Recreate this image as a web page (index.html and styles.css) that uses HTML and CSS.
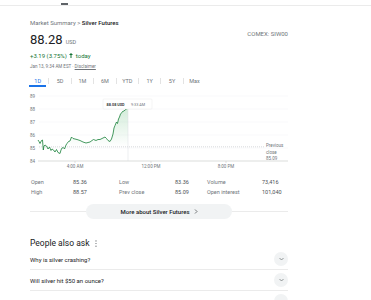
FILE: index.html
```html
<!DOCTYPE html>
<html lang="en">
<head>
    <meta charset="UTF-8">
    <meta name="viewport" content="width=device-width, initial-scale=1.0">
    <title>Silver Futures</title>
    <link rel="stylesheet" href="styles.css">
</head>
<body>
    <div class="topbar">
        <span class="topbar-tab"></span>
    </div>

    <div class="summary">
        <div class="crumb">Market Summary &gt; <b>Silver Futures</b></div>

        <div class="price-row">
            <div class="price">88.28<small>USD</small></div>
            <div class="exchange">COMEX: SIW00</div>
        </div>

        <div class="change">+3.19 (3.75%)
            <svg class="up-arrow" width="4" height="5" viewBox="0 0 8 10"><path d="M4 0 L8 4 H5 V10 H3 V4 H0 Z" fill="#137333"/></svg>
            today</div>
        <div class="asof">Jan 13, 9:34 AM EST · <span class="link">Disclaimer</span></div>

        <div class="ranges">
            <span class="range active"><span>1D</span></span>
            <i class="sep"></i>
            <span class="range"><span>5D</span></span>
            <i class="sep"></i>
            <span class="range"><span>1M</span></span>
            <i class="sep"></i>
            <span class="range"><span>6M</span></span>
            <i class="sep"></i>
            <span class="range"><span>YTD</span></span>
            <i class="sep"></i>
            <span class="range"><span>1Y</span></span>
            <i class="sep"></i>
            <span class="range"><span>5Y</span></span>
            <i class="sep"></i>
            <span class="range"><span>Max</span></span>
        </div>

        <svg class="chart" width="262" height="82" viewBox="28 88 262 82">
            <defs>
                <linearGradient id="areaFill" gradientUnits="userSpaceOnUse" x1="0" y1="106" x2="0" y2="145">
                    <stop offset="0" stop-color="#34a853" stop-opacity="0.22"/>
                    <stop offset="1" stop-color="#34a853" stop-opacity="0"/>
                </linearGradient>
            </defs>
            <g stroke="#f1f3f4" stroke-width="0.5">
                <line x1="39" y1="94" x2="288" y2="94"/>
                <line x1="39" y1="107" x2="288" y2="107"/>
                <line x1="39" y1="120" x2="288" y2="120"/>
                <line x1="39" y1="133" x2="288" y2="133"/>
                <line x1="39" y1="146" x2="288" y2="146"/>
            </g>
            <line x1="38" y1="159" x2="288" y2="159" stroke="#c4c7c5" stroke-width="0.6"/>
            <g stroke="#c4c7c5" stroke-width="0.5">
                <line x1="75" y1="159" x2="75" y2="161"/>
                <line x1="151" y1="159" x2="151" y2="161"/>
                <line x1="226" y1="159" x2="226" y2="161"/>
            </g>
            <g class="axis-text">
                <text x="30" y="95.6">89</text>
                <text x="30" y="108.6">88</text>
                <text x="30" y="121.6">87</text>
                <text x="30" y="134.6">86</text>
                <text x="30" y="147.6">85</text>
                <text x="30" y="160.6">84</text>
                <text x="75" y="166" text-anchor="middle">4:00 AM</text>
                <text x="151" y="166" text-anchor="middle">12:00 PM</text>
                <text x="226" y="166" text-anchor="middle">8:00 PM</text>
                <text x="266" y="145">Previous</text>
                <text x="266" y="151.6">close</text>
                <text x="266" y="158.2">85.09</text>
            </g>
            <line x1="39" y1="144.8" x2="265" y2="144.8" stroke="#9aa0a6" stroke-width="0.5" stroke-dasharray="0.8 1.2"/>
            <polygon fill="url(#areaFill)" points="38,159 38,138 39,139.5 40,141.5 41.5,138.5 42.5,138 43.3,148 44,144 45,143 46.5,144 48,147 49.5,145 51,148.5 52,147 53.5,148 55,150 56.5,147.5 58,150.5 60,151.5 61,148 62,146 63.3,145.5 64.5,147 66,143 67,141.5 68.5,139.5 70,139 71.5,135 73,136.5 75,137 77,137.5 80,138.5 83,140 86,141 88,140.5 90,140 92,138.5 93.5,137.5 96,138.5 98,137.5 100,137.5 102,136.5 104,135.5 105,135 106.5,136.5 108,138.5 110,139.5 111.5,137 113,132 114,126 115,123.5 116.5,120 117.5,121.5 118.5,117 119.5,115 120.5,112 121.5,111 122.5,109.5 124,109 125,108 126.5,107 128,106 128,159"/>
            <line x1="128" y1="106" x2="128" y2="159" stroke="#dadce0" stroke-width="0.5"/>
            <polyline fill="none" stroke="#188038" stroke-width="0.8" stroke-linejoin="round" points="38,138 39,139.5 40,141.5 41.5,138.5 42.5,138 43.3,148 44,144 45,143 46.5,144 48,147 49.5,145 51,148.5 52,147 53.5,148 55,150 56.5,147.5 58,150.5 60,151.5 61,148 62,146 63.3,145.5 64.5,147 66,143 67,141.5 68.5,139.5 70,139 71.5,135 73,136.5 75,137 77,137.5 80,138.5 83,140 86,141 88,140.5 90,140 92,138.5 93.5,137.5 96,138.5 98,137.5 100,137.5 102,136.5 104,135.5 105,135 106.5,136.5 108,138.5 110,139.5 111.5,137 113,132 114,126 115,123.5 116.5,120 117.5,121.5 118.5,117 119.5,115 120.5,112 121.5,111 122.5,109.5 124,109 125,108 126.5,107 128,106"/>
            <rect x="103" y="97" width="49" height="10" rx="1" fill="#ffffff" stroke="#e3e3e3" stroke-width="0.4"/>
            <text class="tip-value" x="106.5" y="103.6">88.08 USD</text>
            <text class="tip-time" x="131" y="103.6">9:33 AM</text>
        </svg>

        <div class="stats">
            <span class="label">Open</span><span class="value">85.36</span>
            <span class="label">Low</span><span class="value">83.36</span>
            <span class="label">Volume</span><span class="value">73,416</span>
            <span class="label">High</span><span class="value">88.57</span>
            <span class="label">Prev close</span><span class="value">85.09</span>
            <span class="label">Open interest</span><span class="value">101,040</span>
        </div>

        <div class="more-row">
            <span class="rule"></span>
            <span class="more-btn">More about Silver Futures
                <svg width="4" height="5" viewBox="0 0 6 10"><path d="M1 1 L5 5 L1 9" fill="none" stroke="#3c4043" stroke-width="1.4"/></svg>
            </span>
            <span class="rule"></span>
        </div>

        <div class="paa-title">People also ask
            <svg class="dots" width="2" height="7" viewBox="0 0 2 8"><circle cx="1" cy="1" r="0.7"/><circle cx="1" cy="4" r="0.7"/><circle cx="1" cy="7" r="0.7"/></svg>
        </div>

        <div class="question">
            <span>Why is silver crashing?</span>
            <span class="expand"><svg width="5" height="4" viewBox="0 0 10 6"><path d="M1 1 L5 5 L9 1" fill="none" stroke="#5f6368" stroke-width="1.3"/></svg></span>
        </div>
        <div class="question">
            <span>Will silver hit $50 an ounce?</span>
            <span class="expand"><svg width="5" height="4" viewBox="0 0 10 6"><path d="M1 1 L5 5 L9 1" fill="none" stroke="#5f6368" stroke-width="1.3"/></svg></span>
        </div>
        <div class="question">
            <span>What did Elon Musk say about silver?</span>
            <span class="expand"><svg width="5" height="4" viewBox="0 0 10 6"><path d="M1 1 L5 5 L9 1" fill="none" stroke="#5f6368" stroke-width="1.3"/></svg></span>
        </div>
    </div>
</body>
</html>
```

FILE: styles.css
```css
body {
    margin: 0;
    font-family: Roboto, "Liberation Sans", Arial, sans-serif;
    color: #202124;
    background: #ffffff;
}

.topbar {
    height: 5px;
    border-bottom: 1px solid #ebebeb;
    display: flex;
    align-items: flex-end;
}

.topbar-tab {
    margin-left: 61px;
    width: 7px;
    height: 2px;
    background: #5f6368;
}

.summary {
    width: 258px;
    margin-left: 30px;
}

.crumb {
    margin-top: 12px;
    font-size: 6px;
    line-height: 9px;
    color: #70757a;
}

.crumb b {
    color: #202124;
    font-weight: 500;
}

.price-row {
    margin-top: 6px;
    display: flex;
    justify-content: space-between;
    align-items: flex-start;
}

.price {
    font-size: 13px;
    line-height: 14px;
}

.price small {
    font-size: 5.5px;
    color: #70757a;
    margin-left: 3px;
}

.exchange {
    margin-top: -3px;
    font-size: 6px;
    line-height: 8px;
    color: #70757a;
}

.change {
    margin-top: 3px;
    font-size: 6px;
    line-height: 8px;
    color: #137333;
}

.up-arrow {
    margin: 0 1px;
}

.asof {
    margin-top: 3px;
    font-size: 4.5px;
    line-height: 7px;
    color: #70757a;
}

.asof .link {
    text-decoration: underline;
}

.ranges {
    margin-top: 7px;
    margin-left: -3px;
    display: flex;
    align-items: center;
}

.range {
    width: 21.4px;
    display: flex;
    justify-content: center;
    font-size: 5.5px;
    line-height: 8px;
    color: #70757a;
}

.range span {
    padding: 0 5px;
    border-bottom: 2px solid transparent;
}

.range.active {
    color: #1a73e8;
}

.range.active span {
    border-bottom-color: #1a73e8;
}

.sep {
    width: 1px;
    height: 6px;
    margin-bottom: 2px;
    background: #e3e3e3;
}

.chart {
    display: block;
    margin-top: 3px;
    margin-left: -2px;
}

.axis-text {
    font-size: 4.5px;
    fill: #70757a;
}

.tip-value {
    font-size: 3.8px;
    font-weight: 700;
    fill: #3c4043;
}

.tip-time {
    font-size: 3.8px;
    fill: #70757a;
}

.stats {
    margin-top: 5px;
    padding-left: 1px;
    display: grid;
    grid-template-columns: 42px 46px 56px 32px 55px auto;
    font-size: 5.5px;
    line-height: 10px;
}

.stats .label {
    color: #70757a;
}

.stats .value {
    color: #4d5156;
}

.more-row {
    margin-top: 7px;
    display: flex;
    align-items: center;
}

.rule {
    flex: 1;
    height: 1px;
    background: #ebebeb;
}

.more-btn {
    width: 146px;
    height: 15px;
    border-radius: 8px;
    background: #f1f3f4;
    display: flex;
    align-items: center;
    justify-content: center;
    gap: 4px;
    font-size: 6px;
    font-weight: 500;
    color: #202124;
}

.paa-title {
    margin-top: 18px;
    display: flex;
    align-items: center;
    gap: 6px;
    font-size: 8.5px;
    line-height: 12px;
    color: #202124;
}

.dots {
    fill: #5f6368;
}

.question {
    height: 20px;
    border-bottom: 1px solid #ebebeb;
    display: flex;
    justify-content: space-between;
    align-items: center;
    font-size: 6px;
    color: #202124;
}

.question:first-of-type {
    margin-top: 2px;
}

.expand {
    width: 14px;
    height: 14px;
    border-radius: 50%;
    background: #f1f3f4;
    display: flex;
    align-items: center;
    justify-content: center;
}
```
